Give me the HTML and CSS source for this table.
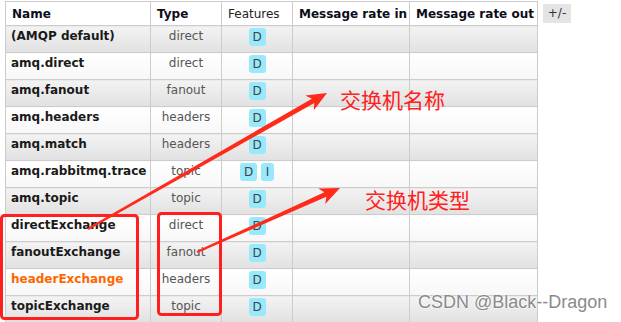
FILE: index.html
```html
<!DOCTYPE html>
<html lang="zh-CN">
<head>
<meta charset="utf-8">
<title>Exchanges</title>
<link rel="stylesheet" href="styles.css">
</head>
<body>
<div class="page">
  <div class="wrap">
    <table class="list">
      <colgroup>
        <col class="c-name"><col class="c-type"><col class="c-feat"><col class="c-in"><col class="c-out">
      </colgroup>
      <thead>
        <tr>
          <th>Name</th>
          <th>Type</th>
          <th class="plain">Features</th>
          <th>Message rate in</th>
          <th>Message rate out</th>
        </tr>
      </thead>
      <tbody>
        <tr class="alt"><td class="name">(AMQP default)</td><td class="type">direct</td><td class="feat"><span class="badge">D</span></td><td></td><td></td></tr>
        <tr><td class="name">amq.direct</td><td class="type">direct</td><td class="feat"><span class="badge">D</span></td><td></td><td></td></tr>
        <tr class="alt"><td class="name">amq.fanout</td><td class="type">fanout</td><td class="feat"><span class="badge">D</span></td><td></td><td></td></tr>
        <tr><td class="name">amq.headers</td><td class="type">headers</td><td class="feat"><span class="badge">D</span></td><td></td><td></td></tr>
        <tr class="alt"><td class="name">amq.match</td><td class="type">headers</td><td class="feat"><span class="badge">D</span></td><td></td><td></td></tr>
        <tr><td class="name">amq.rabbitmq.trace</td><td class="type">topic</td><td class="feat"><span class="badge">D</span><span class="badge narrow">I</span></td><td></td><td></td></tr>
        <tr class="alt"><td class="name">amq.topic</td><td class="type">topic</td><td class="feat"><span class="badge">D</span></td><td></td><td></td></tr>
        <tr><td class="name">directExchange</td><td class="type">direct</td><td class="feat"><span class="badge">D</span></td><td></td><td></td></tr>
        <tr class="alt"><td class="name">fanoutExchange</td><td class="type">fanout</td><td class="feat"><span class="badge">D</span></td><td></td><td></td></tr>
        <tr><td class="name hl">headerExchange</td><td class="type">headers</td><td class="feat"><span class="badge">D</span></td><td></td><td></td></tr>
        <tr class="alt"><td class="name">topicExchange</td><td class="type">topic</td><td class="feat"><span class="badge">D</span></td><td></td><td></td></tr>
      </tbody>
    </table>
    <span class="toggle">+/-</span>
  </div>

  <svg class="marks" width="621" height="322" viewBox="0 0 621 322">
    <rect x="1.5" y="215.5" width="136" height="103" rx="3" fill="none" stroke="#ff1f1f" stroke-width="3"/>
    <rect x="158.5" y="213.5" width="62" height="101" rx="3" fill="none" stroke="#ff1f1f" stroke-width="3"/>
    <polygon fill="#ff2a1a" points="88.5,229.9 314.3,103.1 313.8,110.3 327,93 305.4,95.5 311.9,98.7 87.5,228.1"/>
    <polygon fill="#ff2a1a" points="197.4,252.9 326.4,196.8 325.2,203.9 340,188 318.2,188.4 324.4,192.2 196.6,251.1"/>
  </svg>
  <div class="label label-name">交换机名称</div>
  <div class="label label-type">交换机类型</div>
  <div class="watermark">CSDN @Black--Dragon</div>
</div>
</body>
</html>
```

FILE: styles.css
```css
html, body {
  margin: 0;
  padding: 0;
  background: #ffffff;
}

.page {
  position: relative;
  width: 621px;
  height: 322px;
  overflow: hidden;
  font-family: "DejaVu Sans", Verdana, sans-serif;
}

.wrap {
  display: flex;
  align-items: flex-start;
  gap: 5px;
  padding: 1px 0 0 5px;
}

.list {
  border-collapse: collapse;
  table-layout: fixed;
  width: 532px;
  font-size: 12px;
  color: #222;
}

.c-name { width: 145px; }
.c-type { width: 71px; }
.c-feat { width: 71px; }
.c-in { width: 117px; }
.c-out { width: 128px; }

.list th,
.list td {
  border: 1px solid #cccccc;
  padding: 0 0 0 6px;
  white-space: nowrap;
  overflow: visible;
}

.list th {
  height: 24px;
  box-sizing: border-box;
  text-align: left;
  font-weight: bold;
  color: #0d0d1a;
  background: #ffffff;
  vertical-align: middle;
}

.list th.plain {
  font-weight: normal;
  color: #222;
}

.list td {
  height: 27px;
  vertical-align: top;
  padding-top: 3px;
  box-sizing: border-box;
  line-height: 14px;
  background: linear-gradient(#ffffff, #f7f7f7);
}

.list tr.alt td {
  background: linear-gradient(#f3f3f3, #e1e1e1);
}

.list td.name {
  font-weight: bold;
  color: #1a1a1a;
  padding-left: 5px;
}

.list td.name.hl {
  color: #ff6600;
}

.list td.type {
  text-align: center;
  color: #555555;
  padding-left: 0;
}

.list td.feat {
  text-align: center;
  padding: 2px 0 0 0;
  font-size: 0;
}

.badge {
  display: inline-block;
  width: 17px;
  height: 18px;
  line-height: 19px;
  border-radius: 3px;
  background: #99e9fc;
  color: #444;
  font-size: 12px;
  text-align: center;
  margin: 0 2px;
}

.badge.narrow {
  width: 13px;
}

.toggle {
  margin-top: 3px;
  width: 28px;
  height: 19px;
  line-height: 19px;
  background: #e4e4e4;
  color: #333;
  font-size: 12px;
  text-align: center;
}

.marks {
  position: absolute;
  left: 0;
  top: 0;
  pointer-events: none;
}

.label {
  position: absolute;
  font-family: "Noto Sans CJK SC", sans-serif;
  font-size: 21px;
  line-height: 24px;
  color: #ff2020;
  letter-spacing: 0;
}

.label-name {
  left: 340px;
  top: 87px;
}

.label-type {
  left: 365px;
  top: 187px;
}

.watermark {
  position: absolute;
  left: 418px;
  top: 291px;
  font-family: "Liberation Sans", Arial, sans-serif;
  font-size: 18px;
  line-height: 22px;
  color: #8a8a8a;
  text-shadow: 0 0 2px #ffffff, 0 0 2px #ffffff;
}
```
